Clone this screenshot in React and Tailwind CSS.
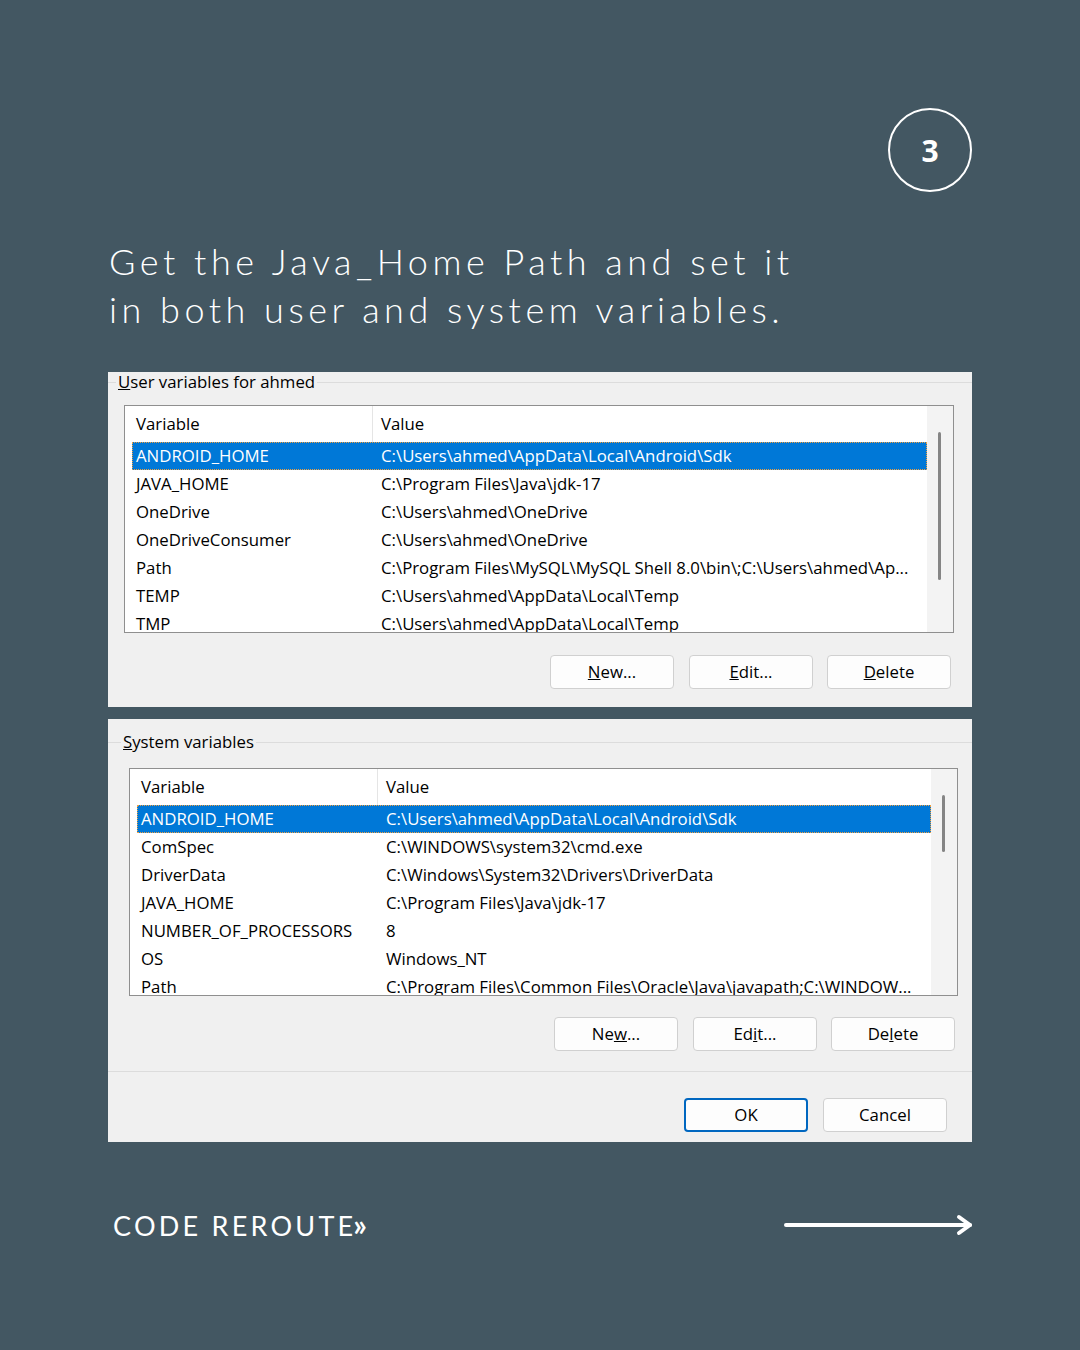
import React from "react";

const userVars = [
  ["ANDROID_HOME", "C:\\Users\\ahmed\\AppData\\Local\\Android\\Sdk"],
  ["JAVA_HOME", "C:\\Program Files\\Java\\jdk-17"],
  ["OneDrive", "C:\\Users\\ahmed\\OneDrive"],
  ["OneDriveConsumer", "C:\\Users\\ahmed\\OneDrive"],
  ["Path", "C:\\Program Files\\MySQL\\MySQL Shell 8.0\\bin\\;C:\\Users\\ahmed\\Ap..."],
  ["TEMP", "C:\\Users\\ahmed\\AppData\\Local\\Temp"],
  ["TMP", "C:\\Users\\ahmed\\AppData\\Local\\Temp"],
];

const systemVars = [
  ["ANDROID_HOME", "C:\\Users\\ahmed\\AppData\\Local\\Android\\Sdk"],
  ["ComSpec", "C:\\WINDOWS\\system32\\cmd.exe"],
  ["DriverData", "C:\\Windows\\System32\\Drivers\\DriverData"],
  ["JAVA_HOME", "C:\\Program Files\\Java\\jdk-17"],
  ["NUMBER_OF_PROCESSORS", "8"],
  ["OS", "Windows_NT"],
  ["Path", "C:\\Program Files\\Common Files\\Oracle\\Java\\javapath;C:\\WINDOW..."],
];

const ui = { fontFamily: '"Open Sans", "Noto Sans", sans-serif' };

function VarList({ rows, thumb }) {
  return (
    <div className="flex h-[228px] border border-[#8f8f8f] bg-white">
      <div className="flex-1 overflow-hidden">
        <div className="flex h-[36px] items-center">
          <div className="w-[247px] pl-[11px]">Variable</div>
          <div className="h-full w-px bg-[#e5e5e5]" />
          <div className="pl-[8px]">Value</div>
        </div>
        <div className="pl-[7px]">
          {rows.map(([name, value], i) => (
            <div
              key={name}
              className={
                i === 0
                  ? "flex h-[28px] items-center border border-dotted border-[#f0a040] bg-[#0078d7] text-white"
                  : "flex h-[28px] items-center border border-transparent"
              }
            >
              <div className="w-[239px] shrink-0 pl-[3px] whitespace-nowrap">{name}</div>
              <div className="pl-[9px] whitespace-nowrap">{value}</div>
            </div>
          ))}
        </div>
      </div>
      <div className="relative w-[26px] bg-[#f3f3f3]">
        <div className={`absolute left-[11px] top-[26px] w-[3px] rounded-full bg-[#858585] ${thumb}`} />
      </div>
    </div>
  );
}

function Btn({ children, primary }) {
  return (
    <div
      className={
        primary
          ? "flex h-[34px] w-[124px] items-center justify-center rounded-[4px] border-2 border-[#0067c0] bg-[#fdfdfd]"
          : "flex h-[34px] w-[124px] items-center justify-center rounded-[4px] border border-[#d0d0d0] bg-[#fdfdfd]"
      }
    >
      {children}
    </div>
  );
}

function Buttons({ labels }) {
  return (
    <div className="flex justify-end">
      <Btn>{labels[0]}</Btn>
      <div className="w-[15px]" />
      <Btn>{labels[1]}</Btn>
      <div className="w-[14px]" />
      <Btn>{labels[2]}</Btn>
    </div>
  );
}

export default function App() {
  return (
    <div className="flex min-h-[1350px] flex-col bg-[#435762] px-[108px] pt-[108px] text-white">
      <div className="flex justify-end">
        <div
          className="flex h-[84px] w-[84px] items-center justify-center rounded-full border-2 border-white text-[30px] font-bold"
          style={{ fontFamily: '"Open Sans", sans-serif' }}
        >
          3
        </div>
      </div>

      <h1
        className="mt-[45px] pl-[1px] text-[36px] font-light leading-[48px] tracking-[0.125em]"
        style={{ fontFamily: 'Lato, "DejaVu Sans", sans-serif' }}
      >
        Get the Java_Home Path and set it
        <br />
        in both user and system variables.
      </h1>

      <div className="mt-[39px] flex flex-col gap-[12px] text-[16.8px] text-black" style={ui}>
        {/* user variables */}
        <div className="h-[335px] bg-[#f0f0f0]">
          <div className="flex h-[20px] items-center">
            <div className="h-px w-[8px] bg-[#dcdcdc]" />
            <span className="px-[2px] leading-[20px]">
              <u>U</u>ser variables for ahmed
            </span>
            <div className="h-px flex-1 bg-[#dcdcdc]" />
          </div>
          <div className="ml-[16px] mr-[18px] mt-[13px]">
            <VarList rows={userVars} thumb="h-[148px]" />
            <div className="mt-[22px] pr-[3px]">
              <Buttons
                labels={[
                  <>
                    <u>N</u>ew...
                  </>,
                  <>
                    <u>E</u>dit...
                  </>,
                  <>
                    <u>D</u>elete
                  </>,
                ]}
              />
            </div>
          </div>
        </div>

        {/* system variables */}
        <div className="h-[423px] bg-[#f0f0f0] pt-[13px]">
          <div className="flex h-[20px] items-center">
            <div className="h-px w-[13px] bg-[#dcdcdc]" />
            <span className="px-[2px] leading-[20px]">
              <u>S</u>ystem variables
            </span>
            <div className="h-px flex-1 bg-[#dcdcdc]" />
          </div>
          <div className="ml-[21px] mr-[14px] mt-[16px]">
            <VarList rows={systemVars} thumb="h-[57px]" />
            <div className="mt-[21px] pr-[3px]">
              <Buttons
                labels={[
                  <>
                    Ne<u>w</u>...
                  </>,
                  <>
                    Ed<u>i</u>t...
                  </>,
                  <>
                    De<u>l</u>ete
                  </>,
                ]}
              />
            </div>
          </div>
          <div className="mt-[20px] h-px bg-[#dcdcdc]" />
          <div className="mr-[25px] mt-[26px] flex justify-end gap-[15px]">
            <Btn primary>OK</Btn>
            <Btn>Cancel</Btn>
          </div>
        </div>
      </div>

      <div className="mt-[65px] flex items-center justify-between">
        <div
          className="pl-[5px] text-[27px] leading-[34px] tracking-[0.12em]"
          style={{ fontFamily: 'Lato, "Open Sans", sans-serif' }}
        >
          CODE REROUT<span className="tracking-normal">E</span>
          <span className="text-[30px] font-bold">»</span>
        </div>
        <svg width="190" height="24" viewBox="0 0 190 24" fill="none" className="mr-[-2px]">
          <path d="M2 12H186" stroke="white" strokeWidth="4" strokeLinecap="round" />
          <path d="M175 4L186 12L175 20" stroke="white" strokeWidth="4" strokeLinecap="round" strokeLinejoin="round" />
        </svg>
      </div>
    </div>
  );
}
